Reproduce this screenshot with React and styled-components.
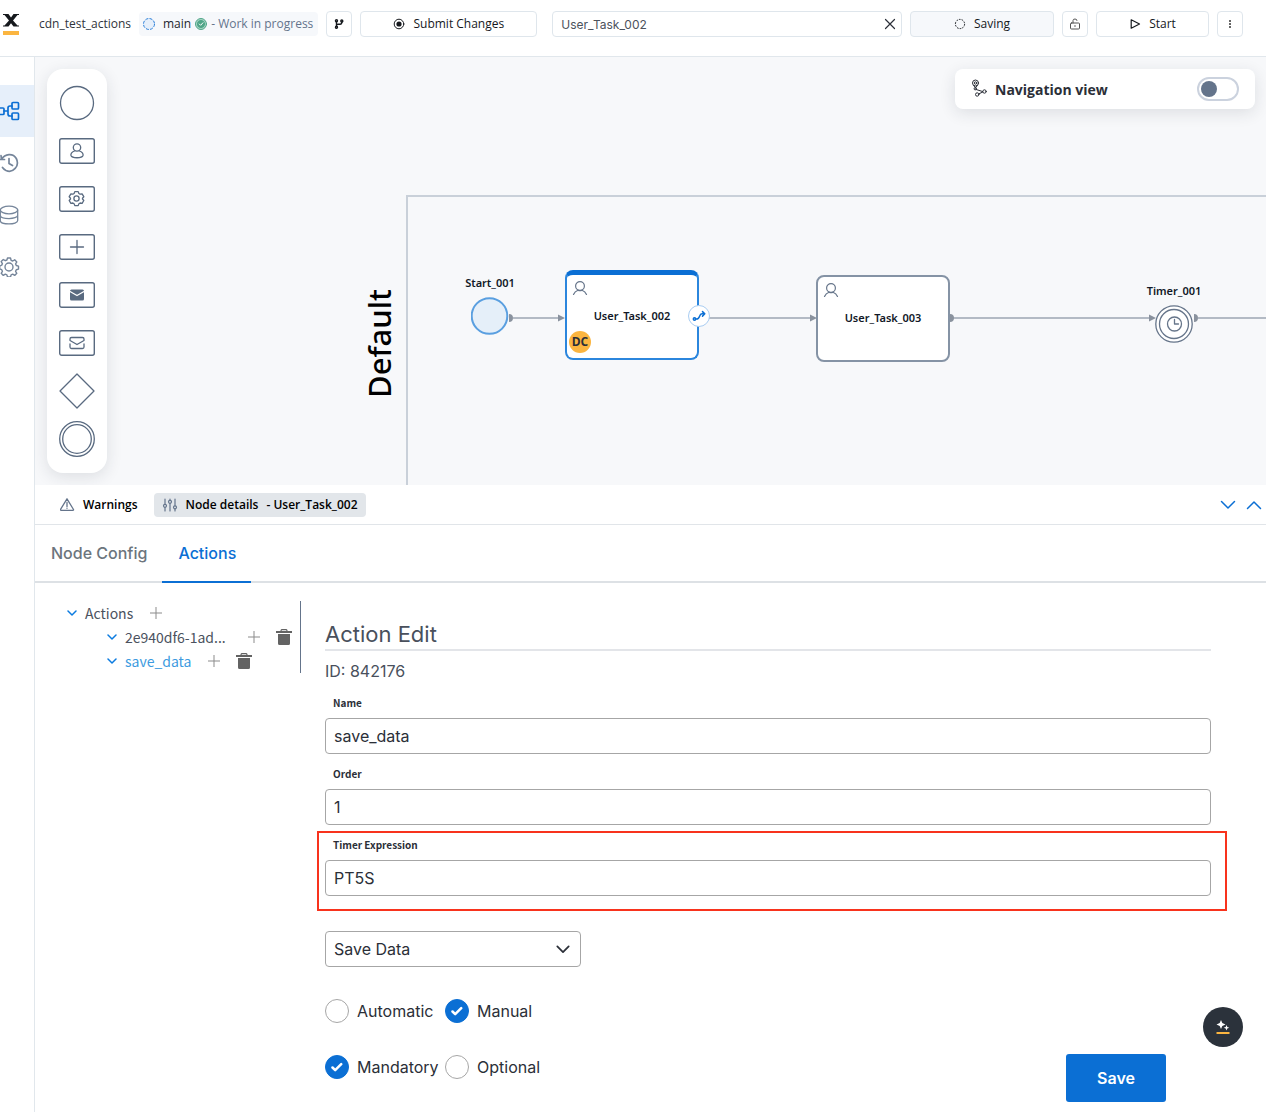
import { useState } from "react";
import styled, { createGlobalStyle } from "styled-components";

const ui = `"Open Sans", "Noto Sans", sans-serif`;
const noto = `"Noto Sans", "Open Sans", sans-serif`;
const inter = `Inter, Roboto, sans-serif`;
const source = `"Noto Sans CJK SC", "Noto Sans", sans-serif`;

const GlobalStyle = createGlobalStyle`
* {
    box-sizing: border-box;
}
body {
    margin: 0;
    background: #fff;
    color: #2b2f38;
    font-family: ${ui};
    font-size: 12px;
}
button, input, select {
    font: inherit;
    color: inherit;
}
button {
    padding: 0;
    border: 0;
    background: none;
    cursor: pointer;
}
svg {
    display: block;
    flex: none;
}
`

// header
const Header = styled.header`
display: flex;
align-items: center;
gap: 8px;
height: 57px;
padding: 0 23px 9px 3px;
border-bottom: 1px solid #e1e7ec;
`
const Logo = styled.a`
margin: 2px 12px 0 0;
`
const Project = styled.span`
white-space: nowrap;
color: #2f343c;
`
const Branch = styled.div`
display: flex;
align-items: center;
height: 24px;
padding: 0 5px 0 4px;
border-radius: 4px;
background: #f6f8fb;
white-space: nowrap;
color: #64748b;
`
const BranchName = styled.span`
margin: 0 4px 0 8px;
color: #22262d;
`
const BranchState = styled.span`
margin-left: 4px;
`
const ToolButton = styled.button`
display: flex;
align-items: center;
justify-content: center;
gap: 8px;
flex: none;
width: ${p => p.$width}px;
height: 26px;
border: 1px solid #dfe6ec;
border-radius: 4px;
background: ${p => p.$muted ? '#f6f8fb' : '#fff'};
color: #15181d;
`
const Search = styled.label`
display: flex;
align-items: center;
flex: 1;
min-width: 120px;
height: 26px;
margin-left: 7px;
padding: 0 5px 0 8px;
border: 1px solid #dfe6ec;
border-radius: 4px;
`
const SearchInput = styled.input`
flex: 1;
min-width: 0;
padding: 1px 0 0;
border: 0;
outline: 0;
background: none;
font-family: ${inter};
font-size: 12px;
color: #4c525c;
`

// page
const Page = styled.div`
display: flex;
align-items: stretch;
`
const SideBar = styled.nav`
flex: none;
width: 35px;
padding-top: 28px;
border-right: 1px solid #e1e7ec;
`
const SideItem = styled.button`
display: flex;
align-items: center;
width: 100%;
height: 52px;
background: ${p => p.$active ? '#e6effa' : 'none'};
color: ${p => p.$active ? '#0b6fd4' : '#75859a'};
`
const Main = styled.main`
flex: 1;
min-width: 0;
`

// diagram
const Canvas = styled.section`
position: relative;
overflow: hidden;
height: 428px;
background: #f7f8fa;
`
const Palette = styled.div`
position: absolute;
left: 12px;
top: 12px;
display: flex;
flex-direction: column;
align-items: center;
gap: 12px;
width: 60px;
padding: 16px 0;
border-radius: 16px;
background: #fff;
box-shadow: 0 4px 16px rgba(30, 40, 60, 0.12);
color: #596a80;
`
const NavigationView = styled.label`
position: absolute;
right: 11px;
top: 12px;
display: flex;
align-items: center;
gap: 8px;
width: 300px;
height: 40px;
padding: 0 16px;
border-radius: 8px;
background: #fff;
box-shadow: 0 4px 16px rgba(30, 40, 60, 0.12);
font-size: 14px;
font-weight: 700;
`
const Toggle = styled.input`
appearance: none;
width: 42px;
height: 24px;
margin: 0 0 0 auto;
padding: 2px;
border: 2px solid #cbd2de;
border-radius: 12px;

&::before {
    content: '';
    display: block;
    width: 16px;
    height: 16px;
    border-radius: 50%;
    background: #64748b;
}
&:checked::before {
    margin-left: auto;
}
`
const Lane = styled.div`
position: absolute;
left: 371px;
top: 138px;
right: -2px;
bottom: -2px;
border: 2px solid #c9d0d9;
`
const LaneTitle = styled.h2`
position: absolute;
left: 324px;
top: 232px;
margin: 0;
writing-mode: vertical-rl;
transform: rotate(180deg);
font-family: ${noto};
font-size: 31px;
font-weight: 500;
line-height: 40px;
color: #000;
`
const Edges = styled.svg`
position: absolute;
left: 0;
top: 0;
width: 100%;
height: 100%;
`
const NodeTitle = styled.span`
font-family: ${noto};
font-size: 11px;
font-weight: 600;
line-height: 16px;
white-space: nowrap;
color: #111827;
`
const EventNode = styled.div`
position: absolute;
left: ${p => p.$x}px;
top: ${p => p.$y}px;
display: flex;
flex-direction: column;
align-items: center;
gap: 6px;
width: 80px;
`
const TaskNode = styled.div`
position: absolute;
left: ${p => p.$x}px;
top: ${p => p.$y}px;
display: flex;
align-items: center;
justify-content: center;
width: 134px;
height: ${p => p.$selected ? 90 : 87}px;
padding-bottom: 2px;
border: 2px solid ${p => p.$selected ? '#2b86dd' : '#8593a5'};
border-top: ${p => p.$selected ? '5px solid #0b6fd4' : '2px solid #8593a5'};
border-radius: 8px;
background: #fff;
`
const TaskIcon = styled.span`
position: absolute;
left: 5px;
top: 5px;
`
const Assignee = styled.span`
position: absolute;
left: 2px;
bottom: 5px;
width: 22px;
height: 22px;
border-radius: 50%;
background: #fbb540;
font-size: 12px;
font-weight: 700;
line-height: 22px;
text-align: center;
`
const LinkButton = styled.button`
position: absolute;
right: -13px;
top: 30px;
display: flex;
align-items: center;
justify-content: center;
width: 22px;
height: 22px;
border: 1px solid #a9cdf2;
border-radius: 50%;
background: #fff;
`

// details panel
const PanelBar = styled.div`
display: flex;
align-items: center;
gap: 8px;
height: 40px;
padding: 0 4px 0 17px;
border-bottom: 1px solid #e1e5e9;
`
const PanelTab = styled.button`
display: flex;
align-items: center;
gap: 8px;
height: 24px;
padding: 0 8px;
border-radius: 4px;
background: ${p => p.$active ? '#e2e6ea' : 'none'};
font-weight: 600;
color: #000;
`
const PanelArrows = styled.div`
display: flex;
gap: 10px;
margin-left: auto;
color: #0b6fd4;
`
const Tabs = styled.div`
display: flex;
height: 58px;
border-bottom: 2px solid #dde1e5;
`
const Tab = styled.button`
height: 58px;
padding: 0 15px 0 16px;
border-bottom: 2px solid ${p => p.$active ? '#0b6fd4' : 'transparent'};
font-family: ${inter};
font-size: 16px;
font-weight: 500;
color: ${p => p.$active ? '#0b6fd4' : '#6c757d'};
`
const PanelBody = styled.div`
display: flex;
align-items: flex-start;
gap: 16px;
padding: 18px 39px 10px 0;
`
const Tree = styled.ul`
flex: none;
width: 266px;
margin: 0;
padding: 0 8px 0 32px;
border-right: 1px solid #64748b;
list-style: none;
font-family: ${source};
font-size: 14px;
line-height: 24px;
`
const TreeRow = styled.li`
display: flex;
align-items: center;
height: 24px;
padding-left: ${p => p.$level * 40}px;
color: ${p => p.$active ? '#3d9be0' : '#4b525e'};
`
const TreeName = styled.span`
min-width: ${p => p.$long ? 106 : 0}px;
margin: 0 17px 0 8px;
white-space: nowrap;
`
const TreeButton = styled.button`
margin-right: ${p => p.$gap || 0}px;
`
const Form = styled.form`
flex: 1;
min-width: 0;
font-family: ${inter};
font-size: 16px;
`
const FormTitle = styled.h1`
margin: 18px 16px 8px 8px;
border-bottom: 2px solid #e3e5e9;
font-size: 22px;
font-weight: 400;
line-height: 30px;
color: #49505c;
`
const ActionId = styled.p`
margin: 0 8px 6px;
line-height: 24px;
color: #49505c;
`
const Field = styled.div`
padding: 6px 14px 13px 6px;
margin-bottom: ${p => p.$last ? 20 : -9}px;
border: 2px solid ${p => p.$highlight ? '#f8331d' : 'transparent'};
`
const FieldLabel = styled.label`
display: block;
margin-bottom: 9px;
padding-left: 8px;
font-family: ${source};
font-size: 10px;
font-weight: 600;
line-height: 12px;
`
const FieldInput = styled.input`
display: block;
width: 100%;
height: 36px;
padding: 0 8px;
border: 1px solid #a6a6a6;
border-radius: 4px;
background: #fff;
`
const SelectBox = styled.div`
display: grid;
align-items: center;
width: 256px;
margin: 0 8px 32px;

& > * {
    grid-area: 1 / 1;
}
& > svg {
    justify-self: end;
    margin-right: 11px;
    pointer-events: none;
}
`
const Select = styled.select`
appearance: none;
width: 100%;
height: 36px;
padding: 0 8px;
border: 1px solid #a6a6a6;
border-radius: 4px;
background: #fff;
`
const Choices = styled.div`
display: grid;
grid-template-columns: 120px 120px;
height: 24px;
`
const Choice = styled.label`
display: flex;
align-items: center;
gap: 8px;
`
const RadioBox = styled.span`
display: grid;
place-items: center;

& > * {
    grid-area: 1 / 1;
}
`
const Radio = styled.input`
appearance: none;
width: 24px;
height: 24px;
margin: 0;
border: 1px solid #a6a6a6;
border-radius: 50%;

&:checked {
    border-color: #0b6fd4;
    background: #0b6fd4;
}
`
const FormFooter = styled.div`
display: flex;
align-items: flex-end;
justify-content: space-between;
padding: 0 61px 0 8px;
`
const ChoiceGroup = styled.div`
display: flex;
flex-direction: column;
gap: 32px;
padding-bottom: 23px;
`
const SaveButton = styled.button`
width: 100px;
height: 48px;
border-radius: 3px;
background: #0b6fd4;
font-weight: 600;
color: #fff;
`
const AssistantButton = styled.button`
position: fixed;
right: 23px;
bottom: 65px;
display: flex;
align-items: center;
justify-content: center;
width: 40px;
height: 40px;
border-radius: 50%;
background: #2b323b;
`

// icons
const Icon = ({ w = 16, h, box, children, ...rest }) => (
    <svg width={w} height={h || w} viewBox={box || `0 0 ${w} ${h || w}`} fill="none"
        stroke="currentColor" strokeLinecap="round" strokeLinejoin="round" aria-hidden="true" {...rest}>
        {children}
    </svg>
)

const Chevron = ({ w = 16, h = 10, width = 2, up }) => (
    <Icon w={w} h={h} box="0 0 16 10" strokeWidth={width}>
        <path d={up ? "M1.5 8.5 8 2l6.5 6.5" : "M1.5 1.5 8 8l6.5-6.5"} />
    </Icon>
)

const Plus = () => (
    <Icon w={12} stroke="#8b8b8b" strokeLinecap="butt"><path d="M6 0v12M0 6h12" /></Icon>
)

const Trash = () => (
    <Icon w={16} stroke="none" fill="#636363">
        <path d="M5.5 0h5l1 1v1H16v2H0V2h4.5V1zM5.7 1.2V2h4.6v-.8zM2 5h12v9.5q0 1.5-1.5 1.5h-9Q2 16 2 14.5z" fillRule="evenodd" />
    </Icon>
)

const Person = () => (
    <Icon w={16} stroke="#66758a" strokeWidth="1.2">
        <circle cx="8" cy="6" r="4.4" />
        <path d="M1.5 14.5C2.5 12 4.5 10.7 6 10.2q2 1 4 0C11.5 10.7 13.5 12 14.5 14.5" />
    </Icon>
)

const PaletteItem = ({ label, children }) => (
    <button type="button" aria-label={label}>
        <Icon w={36} strokeWidth="1.3">{children}</Icon>
    </button>
)

const frame = <rect x="0.7" y="5.7" width="34.6" height="24.6" rx="2" strokeWidth="1.4" />

const Diagram = () => (
    <Canvas aria-label="Process diagram">
        <Lane />
        <LaneTitle>Default</LaneTitle>
        <Edges aria-hidden="true">
            <g stroke="#b3bac4" strokeWidth="2">
                <line x1="478" y1="261" x2="524" y2="261" />
                <line x1="664" y1="261" x2="776" y2="261" />
                <line x1="918" y1="261" x2="1115" y2="261" />
                <line x1="1163" y1="261" x2="100%" y2="261" />
            </g>
            <g fill="#8a929e">
                <path d="M523 257.5l7 3.5-7 3.5zM775 257.5l7 3.5-7 3.5zM1114 257.5l7 3.5-7 3.5z" />
                <path d="M474 257a4 4 0 0 1 0 8zM915 257a4 4 0 0 1 0 8zM1159 257a4 4 0 0 1 0 8z" />
            </g>
        </Edges>
        <EventNode $x={415} $y={218}>
            <NodeTitle>Start_001</NodeTitle>
            <Icon w={38} stroke="#5a9fe0" strokeWidth="2"><circle cx="18.5" cy="19" r="17.8" fill="#e5eff9" /></Icon>
        </EventNode>
        <TaskNode $x={530} $y={213} $selected>
            <TaskIcon><Person /></TaskIcon>
            <NodeTitle>User_Task_002</NodeTitle>
            <Assignee>DC</Assignee>
            <LinkButton type="button" aria-label="Connect node">
                <Icon w={14} stroke="#0b6fd4" strokeWidth="1.5">
                    <circle cx="2.5" cy="10" r="1.2" />
                    <path d="M4.2 10C8.5 10.5 6.500 5 10 4.800h2.500M10.5 2.600l2.300 2.200-2.300 2.300" />
                </Icon>
            </LinkButton>
        </TaskNode>
        <TaskNode $x={781} $y={218}>
            <TaskIcon><Person /></TaskIcon>
            <NodeTitle>User_Task_003</NodeTitle>
        </TaskNode>
        <EventNode $x={1099} $y={226}>
            <NodeTitle>Timer_001</NodeTitle>
            <Icon w={38} stroke="#66758a" strokeWidth="1.3">
                <circle cx="19" cy="19" r="18.2" fill="#fff" />
                <circle cx="19" cy="19" r="14.5" />
                <circle cx="19.5" cy="19" r="7" />
                <path d="M19.5 14.5V19h4" />
            </Icon>
        </EventNode>
        <Palette>
            <PaletteItem label="Start event"><circle cx="18" cy="18" r="16.5" /></PaletteItem>
            <PaletteItem label="User task">
                {frame}
                <circle cx="18" cy="14.5" r="3.7" />
                <path d="M15.5 18c-2.5 1-4 2.5-3.5 4.5 1 3 11 3 12 0 .5-2-1-3.5-3.5-4.5" />
            </PaletteItem>
            <PaletteItem label="Service task">
                {frame}
                <circle cx="17.5" cy="17.5" r="2.6" />
                <path d="M15.8 10.6h3.4l.7 1.900 1.200.7 2-.4 1.700 2.900-1.300 1.500v.800l1.300 1.500-1.700 2.900-2-.4-1.200.7-.7 1.900h-3.400l-.7-1.900-1.200-.7-2 .4-1.700-2.900 1.300-1.500v-.800l-1.300-1.500 1.700-2.900 2 .4 1.200-.7z" />
            </PaletteItem>
            <PaletteItem label="Sub process">{frame}<path d="M18 11.5v13M11.5 18h13" /></PaletteItem>
            <PaletteItem label="Send message">
                {frame}
                <rect x="11" y="12.5" width="14" height="11" rx="1.5" fill="currentColor" stroke="none" />
                <path d="M11 14.5l7 4 7-4" stroke="#fff" />
            </PaletteItem>
            <PaletteItem label="Receive message">
                {frame}
                <path d="M11 15.5V14q0-1.5 1.5-1.5h11q1.5 0 1.5 1.5v1.5l-7 4zM11 19v3q0 1.5 1.5 1.5h11q1.5 0 1.5-1.5v-3" />
            </PaletteItem>
            <PaletteItem label="Gateway"><path d="M18 1l17 17-17 17L1 18z" /></PaletteItem>
            <PaletteItem label="Intermediate event">
                <circle cx="18" cy="18" r="17.3" />
                <circle cx="18" cy="18" r="14.3" />
            </PaletteItem>
        </Palette>
        <NavigationView>
            <Icon w={16} h={20}>
                <circle cx="4.5" cy="4" r="3" /><circle cx="4.5" cy="4" r="1.2" />
                <path d="M2.700 6.500 4.500 9l1.800-2.500" />
                <circle cx="4.200" cy="9.800" r="1.100" />
                <path d="M5.200 10.500 11.500 12.500M8 14.800l3.700-1.800" />
                <circle cx="6.200" cy="15.500" r="1.700" /><circle cx="13.500" cy="12.500" r="1.700" />
            </Icon>
            Navigation view
            <Toggle type="checkbox" role="switch" />
        </NavigationView>
    </Canvas>
)

const RadioChoice = ({ name, value, current, onPick }) => (
    <Choice>
        <RadioBox>
            <Radio type="radio" name={name} checked={current === value} onChange={() => onPick(value)} />
            {
                current === value &&
                <Icon w={12} stroke="#fff" strokeWidth="2.5" pointerEvents="none"><path d="M1.5 6.5l2.7 2.7 6-6" /></Icon>
            }
        </RadioBox>
        {value}
    </Choice>
)

const fields = [
    { id: "name", label: "Name", value: "save_data" },
    { id: "order", label: "Order", value: "1" },
    { id: "timer", label: "Timer Expression", value: "PT5S", highlight: true },
]

const ActionForm = () => {
    const [trigger, setTrigger] = useState("Manual");
    const [required, setRequired] = useState("Mandatory");

    return (
        <Form onSubmit={e => e.preventDefault()}>
            <FormTitle>Action Edit</FormTitle>
            <ActionId>ID: 842176</ActionId>
            {
                fields.map((it, idx) => (
                    <Field key={it.id} $highlight={it.highlight} $last={idx === fields.length - 1}>
                        <FieldLabel htmlFor={it.id}>{it.label}</FieldLabel>
                        <FieldInput id={it.id} defaultValue={it.value} />
                    </Field>
                ))
            }
            <SelectBox>
                <Select aria-label="Action type" defaultValue="Save Data">
                    <option>Save Data</option>
                </Select>
                <Chevron w={14} h={9} />
            </SelectBox>
            <FormFooter>
                <ChoiceGroup>
                    <Choices>
                        <RadioChoice name="trigger" value="Automatic" current={trigger} onPick={setTrigger} />
                        <RadioChoice name="trigger" value="Manual" current={trigger} onPick={setTrigger} />
                    </Choices>
                    <Choices>
                        <RadioChoice name="required" value="Mandatory" current={required} onPick={setRequired} />
                        <RadioChoice name="required" value="Optional" current={required} onPick={setRequired} />
                    </Choices>
                </ChoiceGroup>
                <SaveButton type="submit">Save</SaveButton>
            </FormFooter>
        </Form>
    )
}

const TreeItem = ({ name, level = 0, active }) => (
    <TreeRow $level={level} $active={active}>
        <TreeButton type="button" aria-label="Toggle">
            <Icon w={10} h={6} stroke="#0b7be0" strokeWidth="1.5"><path d="M1 1l4 4 4-4" /></Icon>
        </TreeButton>
        <TreeName $long={name.endsWith("...")}>{name}</TreeName>
        <TreeButton type="button" aria-label="Add" $gap={16}><Plus /></TreeButton>
        {level > 0 && <TreeButton type="button" aria-label="Delete"><Trash /></TreeButton>}
    </TreeRow>
)

const App = () => (
    <>
        <GlobalStyle />
        <Header>
            <Logo href="#" aria-label="Home">
                <Icon w={16} h={22} stroke="none">
                    <path d="M0 0h5.5L8 3.5 10.5 0H16v1h-1.5L10 6.5l4.5 5H16v1h-5.5L8 9.3l-2.5 3.2H0v-1h1.5L6 6.5 1.5 1H0z" fill="#16191d" />
                    <path d="M0 17h16v4H0z" fill="#fbb540" />
                </Icon>
            </Logo>
            <Project>cdn_test_actions</Project>
            <Branch>
                <Icon w={12} stroke="#2b7fd9" strokeDasharray="3 1.3" strokeLinecap="butt"><circle cx="6" cy="6" r="5.5" fill="#e6effa" /></Icon>
                <BranchName>main</BranchName>
                <Icon w={12} stroke="#4fa588">
                    <circle cx="6" cy="6" r="5.5" fill="#a9d6c5" /><circle cx="6" cy="6" r="3.6" fill="#4fa588" />
                    <path d="M4.3 6l1.3 1.3 2.3-2.5" stroke="#fff" />
                </Icon>
                <BranchState>- Work in progress</BranchState>
            </Branch>
            <ToolButton type="button" $width={26} aria-label="Branches">
                <Icon w={10} strokeWidth="1.4">
                    <circle cx="2.5" cy="1.8" r="1" /><circle cx="2.5" cy="8.3" r="1" /><circle cx="7.8" cy="2" r="1" />
                    <path d="M2.5 3v4.5M2.5 6.3q0-1 1.5-1h2q1.8 0 1.8-2.3" />
                </Icon>
            </ToolButton>
            <ToolButton type="button" $width={177}>
                <Icon w={12}><circle cx="6" cy="6" r="4.8" /><circle cx="6" cy="6" r="2.6" fill="currentColor" stroke="none" /></Icon>
                Submit Changes
            </ToolButton>
            <Search>
                <SearchInput aria-label="Search nodes" defaultValue="User_Task_002" />
                <button type="button" aria-label="Clear">
                    <Icon w={12} strokeWidth="1.2"><path d="M1.5 1.5l9 9M10.5 1.5l-9 9" /></Icon>
                </button>
            </Search>
            <ToolButton type="button" $width={144} $muted>
                <Icon w={12} strokeDasharray="1.7 1.15" strokeLinecap="butt"><circle cx="6" cy="6" r="4.6" /></Icon>
                Saving
            </ToolButton>
            <ToolButton type="button" $width={26} aria-label="Unlock">
                <Icon w={12} stroke="#555"><rect x="1.5" y="5" width="9" height="6" rx="1" /><path d="M4 5V2.5q0-1.5 2-1.5t2 1.5M5.5 8h1" /></Icon>
            </ToolButton>
            <ToolButton type="button" $width={113}>
                <Icon w={12} strokeWidth="1.2"><path d="M2.2 1.8v8.4L10.5 6z" /></Icon>
                Start
            </ToolButton>
            <ToolButton type="button" $width={26} aria-label="More">
                <Icon w={12} stroke="none" fill="#666"><path d="M5 2h2v2H5zM5 5h2v2H5zM5 8h2v2H5z" /></Icon>
            </ToolButton>
        </Header>
        <Page>
            <SideBar>
                <SideItem type="button" $active aria-label="Process">
                    <Icon w={20} strokeWidth="1.7">
                        <rect x="-3" y="7" width="7" height="6.5" rx="1" /><rect x="12" y="1.5" width="6.5" height="6.5" rx="1" /><rect x="12" y="12" width="6.5" height="6.5" rx="1" />
                        <path d="M4 10h4M12 5h-2q-2 0-2 2v6q0 2 2 2h2" />
                    </Icon>
                </SideItem>
                <SideItem type="button" aria-label="History">
                    <Icon w={20} strokeWidth="1.7"><path d="M0 6.5h4.5M1 2.5l.5 4C5 .5 13 0 16.3 5.5 20 13 13 20.5 6 17.5q-2-1-3.5-3M9 5.5v5l3.5 2" /></Icon>
                </SideItem>
                <SideItem type="button" aria-label="Data model">
                    <Icon w={20} strokeWidth="1.3"><ellipse cx="9" cy="5" rx="8.7" ry="3.8" /><path d="M.3 5v10.5c0 4.5 17.4 4.5 17.4 0V5M.3 10.2c0 4.5 17.4 4.5 17.4 0" /></Icon>
                </SideItem>
                <SideItem type="button" aria-label="Settings">
                    <Icon w={20} strokeWidth="1.4">
                        <circle cx="9" cy="10" r="4" />
                        <path d="M7.5 1h3l.6 2.3 1.6.7 2-1.2 2.1 2.1-1.2 2 .7 1.6 2.2.6v3l-2.2.6-.7 1.6 1.2 2-2.1 2.1-2-1.2-1.6.7-.6 2.1h-3l-.6-2.1-1.6-.7-2 1.2-2.1-2.1 1.2-2-.7-1.6L-.3 12V9l2-.8.7-1.6-1.2-2 2.1-2.1 2 1.2 1.6-.7z" />
                    </Icon>
                </SideItem>
            </SideBar>
            <Main>
                <Diagram />
                <PanelBar>
                    <PanelTab type="button">
                        <Icon w={15} stroke="#64748b" strokeWidth="1.3"><path d="M7 1.800 13.500 12.500q.3.800-.6.800H1.100q-.9 0-.6-.8zM7 5.500v4M7 11.200v.1" /></Icon>
                        Warnings
                    </PanelTab>
                    <PanelTab type="button" $active>
                        <Icon w={16} stroke="#64748b" strokeWidth="1.2">
                            <path d="M3 2v5M3 10.5V14M8 2v1M8 6.5V14M13 2v6.5M13 12v2" />
                            <circle cx="3" cy="8.8" r="1.5" /><circle cx="8" cy="4.8" r="1.5" /><circle cx="13" cy="10.3" r="1.5" />
                        </Icon>
                        <span>Node details</span>
                        <span>- User_Task_002</span>
                    </PanelTab>
                    <PanelArrows>
                        <button type="button" aria-label="Collapse"><Chevron width={1.5} /></button>
                        <button type="button" aria-label="Expand"><Chevron width={1.5} up /></button>
                    </PanelArrows>
                </PanelBar>
                <Tabs role="tablist">
                    <Tab type="button" role="tab">Node Config</Tab>
                    <Tab type="button" role="tab" aria-selected="true" $active>Actions</Tab>
                </Tabs>
                <PanelBody>
                    <Tree>
                        <TreeItem name="Actions" />
                        <TreeItem name="2e940df6-1ad..." level={1} />
                        <TreeItem name="save_data" level={1} active />
                    </Tree>
                    <ActionForm />
                </PanelBody>
            </Main>
        </Page>
        <AssistantButton type="button" aria-label="Assistant">
            <Icon w={14} h={16} stroke="none" fill="#fff">
                <path d="M5 1l1.3 3L9.5 5.5 6.3 7 5 10 3.7 7 .5 5.5 3.7 4zM10.5 6l.8 2 2 .8-2 .8-.8 2-.8-2-2-.8 2-.8z" />
                <path d="M.5 13h13v2H.5z" fill="#fbb540" />
            </Icon>
        </AssistantButton>
    </>
)

export default App;
